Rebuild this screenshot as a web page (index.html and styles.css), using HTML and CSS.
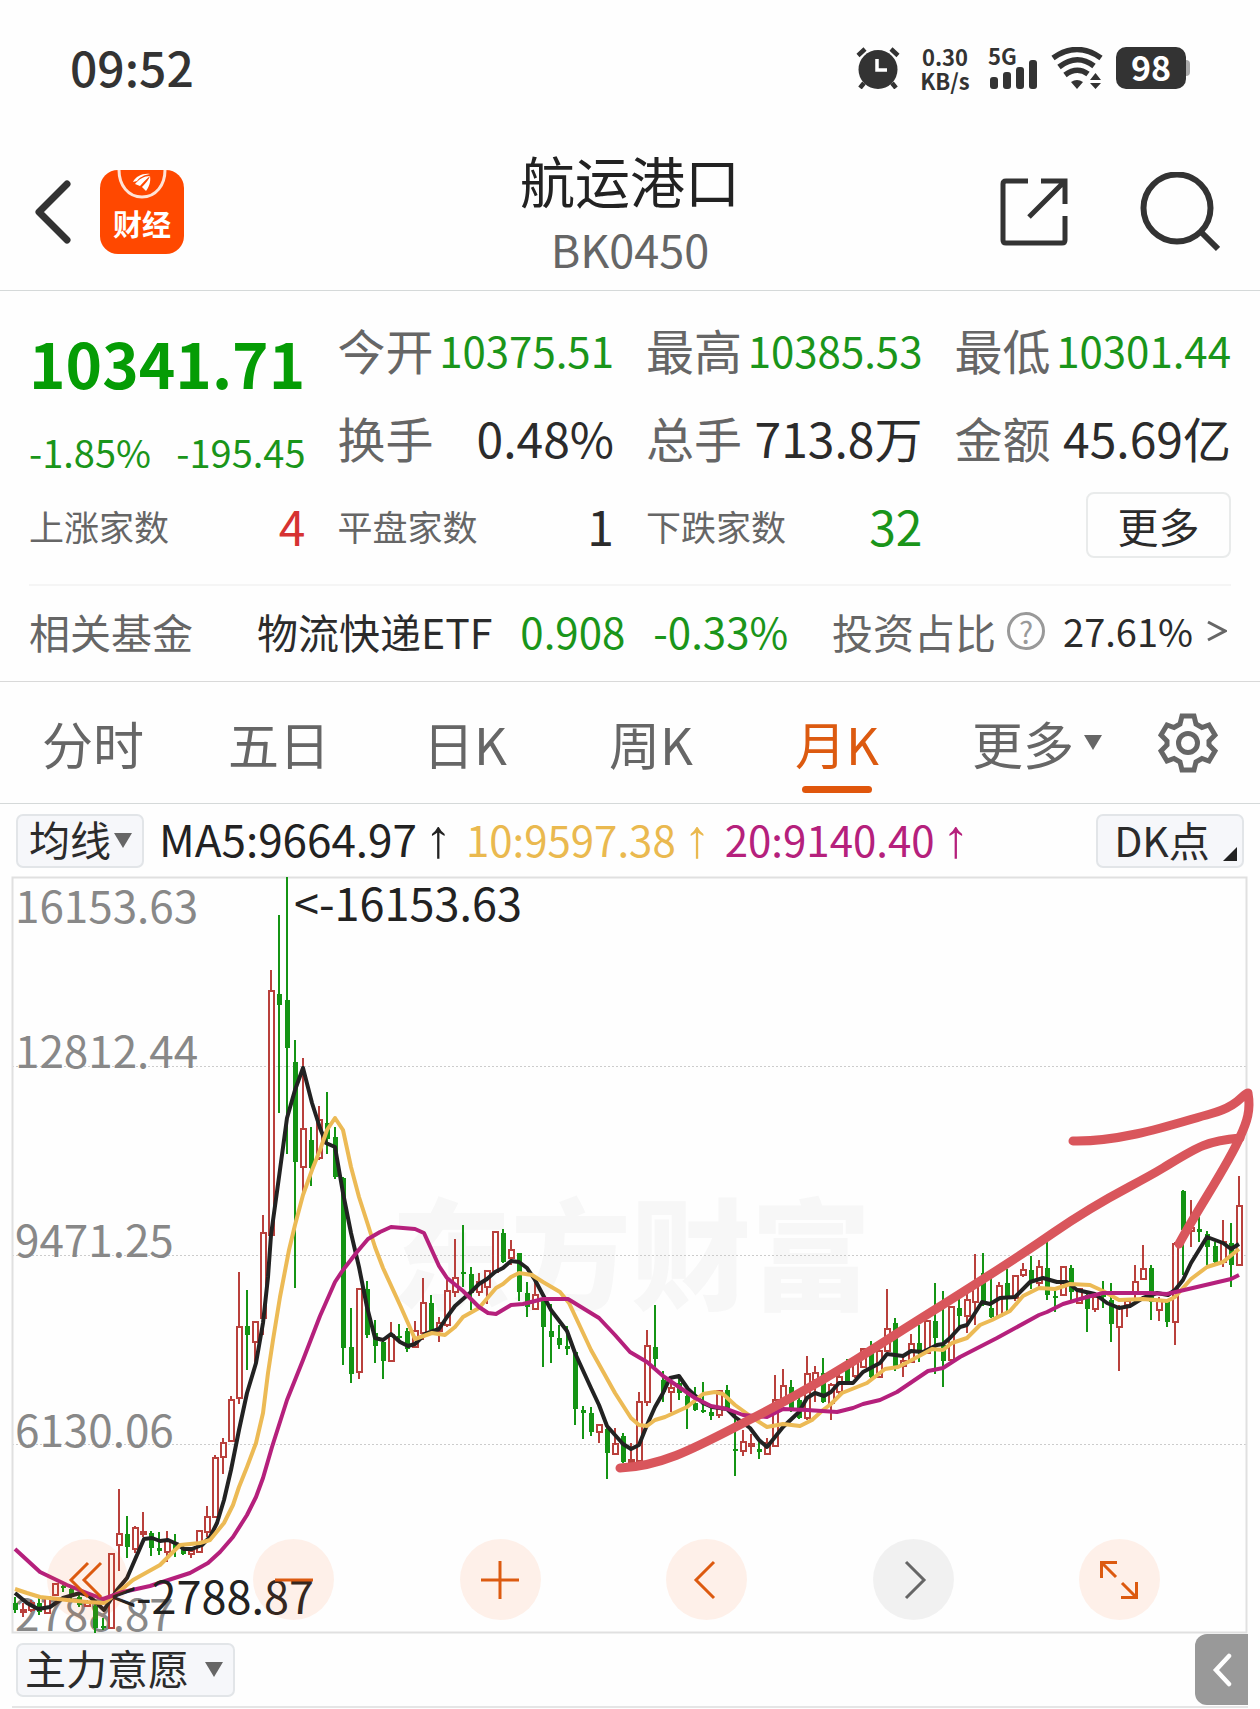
FILE: index.html
```html
<!DOCTYPE html>
<html lang="zh-CN">
<head>
  <meta charset="UTF-8" />
  <meta name="viewport" content="width=device-width, initial-scale=1.0" />
  <title>航运港口 BK0450</title>
  <link rel="stylesheet" href="styles.css">
</head>
<body>

<div class="status-bar">
  <div class="clock">09:52</div>
  <div class="status-icons">
    <svg width="44" height="42" viewBox="0 0 44 42">
      <circle cx="22" cy="22.500" r="19.500" fill="#333"/>
      <path d="M2 8.500L9 2M42 8.500L35 2M8 36l-4 5M36 36l4 5" stroke="#333" stroke-width="4.500" fill="none"/>
      <path d="M21 12v11h10" stroke="#fff" stroke-width="3.500" fill="none"/>
    </svg>
    <div class="speed"><span>0.30</span><span>KB/s</span></div>
    <div class="signal">
      <span>5G</span>
      <svg width="48" height="42" viewBox="0 0 48 42" fill="#333">
        <rect x="0" y="30" width="8" height="12" rx="3"/>
        <rect x="13" y="25" width="8" height="17" rx="3"/>
        <rect x="26" y="20" width="8" height="22" rx="3"/>
        <rect x="39" y="13" width="8" height="29" rx="3"/>
      </svg>
    </div>
    <svg width="52" height="42" viewBox="0 0 52 42">
      <path d="M2 11Q26 -6 50 11M8 20Q26 6 43 19M14 28Q26 19 37 27" stroke="#333" stroke-width="5.500" fill="none"/>
      <path d="M20 35q6-4 12 0l-6 7zM39 33l5.500-7 5.500 7zM39 36h11l-5.500 6z" fill="#333"/>
    </svg>
    <div class="battery">98</div>
  </div>
</div>

<header class="header">
  <div class="header-side">
    <button class="icon-btn" aria-label="返回">
      <svg width="38" height="64" viewBox="0 0 38 64"><path d="M33 4L5 32l28 28" stroke="#333" stroke-width="7" stroke-linecap="round" stroke-linejoin="round" fill="none"/></svg>
    </button>
    <div class="logo">
      <svg width="50" height="30" viewBox="0 0 50 30">
        <path d="M2 0c0 15 9 27 23 27S48 15 48 0" stroke="#ffe3d6" stroke-width="3" fill="none"/>
        <path d="M16 12c3-6 10-9 17-8-6 1-10 3-13 7zM18 14c4-5 9-8 15-8-4 3-7 7-10 10zM25 17c4-4 7-8 8-11 1 6-1 11-4 15z" fill="#fff"/>
      </svg>
      <span>财经</span>
    </div>
  </div>
  <div class="header-title">
    <h1>航运港口</h1>
    <p>BK0450</p>
  </div>
  <div class="header-side right">
    <button class="icon-btn" aria-label="分享">
      <svg width="68" height="68" viewBox="0 0 68 68"><path d="M28 3H6Q3 3 3 6V62Q3 65 6 65H62Q65 65 65 62V38M41 3H65V26M65 3L29 39" stroke="#333" stroke-width="5" fill="none"/></svg>
    </button>
    <button class="icon-btn" aria-label="搜索">
      <svg width="80" height="80" viewBox="0 0 80 80"><circle cx="37" cy="36" r="33.500" stroke="#333" stroke-width="6" fill="none"/><path d="M60 59L78 77" stroke="#333" stroke-width="6"/></svg>
    </button>
  </div>
</header>

<section class="quote">
  <div class="quote-grid">
    <div class="price-block">
      <div class="price">10341.71</div>
      <div class="changes"><span>-1.85%</span><span>-195.45</span></div>
    </div>
    <div class="stat"><span>今开</span><b class="small down">10375.51</b></div>
    <div class="stat"><span>最高</span><b class="small down">10385.53</b></div>
    <div class="stat"><span>最低</span><b class="small down">10301.44</b></div>
    <div class="stat"><span>换手</span><b>0.48%</b></div>
    <div class="stat"><span>总手</span><b>713.8万</b></div>
    <div class="stat"><span>金额</span><b>45.69亿</b></div>
    <div class="stat count"><span>上涨家数</span><b class="up">4</b></div>
    <div class="stat count"><span>平盘家数</span><b>1</b></div>
    <div class="stat count"><span>下跌家数</span><b class="down">32</b></div>
    <div class="stat more"><button class="more-btn">更多</button></div>
  </div>
  <div class="fund">
    <span class="muted">相关基金</span>
    <a href="#" class="fund-name">物流快递ETF</a>
    <span class="down num">0.908</span>
    <span class="down num">-0.33%</span>
    <span class="ratio">
      <span class="muted">投资占比</span>
      <button class="help" aria-label="说明">?</button>
      <span class="percent">27.61%</span>
      <svg width="20" height="24" viewBox="0 0 20 24"><path d="M1 3l17 9L1 21" stroke="#666" stroke-width="3" fill="none"/></svg>
    </span>
  </div>
</section>

<nav class="tabs">
  <button class="tab">分时</button>
  <button class="tab">五日</button>
  <button class="tab">日K</button>
  <button class="tab">周K</button>
  <button class="tab active">月K</button>
  <div class="dropdown tab-more">
    <select aria-label="更多周期"><option>更多</option></select>
  </div>
  <button class="icon-btn" aria-label="设置">
    <svg width="60" height="60" viewBox="0 0 60 60" fill="none" stroke="#666" stroke-width="5" stroke-linejoin="miter">
      <path d="M24 3H36L38 11L44 14.500L51 12L57 22L51 28V32L57 38L51 48L44 45.500L38 49L36 57H24L22 49L16 45.500L9 48L3 38L9 32V28L3 22L9 12L16 14.500L22 11Z"/>
      <circle cx="30" cy="30" r="9.500"/>
    </svg>
  </button>
</nav>

<div class="ma-bar">
  <div class="dropdown box">
    <select aria-label="主图指标"><option>均线</option></select>
  </div>
  <div class="ma-values">
    <span class="ma5">MA5:9664.97<i>↑</i></span>
    <span class="ma10">10:9597.38<i>↑</i></span>
    <span class="ma20">20:9140.40<i>↑</i></span>
  </div>
  <button class="dk-btn">DK点</button>
</div>

<section class="chart">
  <svg class="kline" id="kline" viewBox="12 877 1236 756">
    <text class="watermark" x="391" y="1301">东方财富</text>
    <path class="grid" d="M12 1066.500H1247M12 1255.500H1247M12 1444.500H1247"/>
    <rect class="frame" x="12.500" y="877.500" width="1234" height="755"/>
    <g class="axis">
      <text x="15" y="923">16153.63</text>
      <text x="15" y="1068">12812.44</text>
      <text x="15" y="1257">9471.25</text>
      <text x="15" y="1447">6130.06</text>
      <text x="15" y="1631">2788.87</text>
    </g>
    <g id="candles"></g>
    <polyline class="line line5" points="15,1593 27,1603 38,1609 50,1607 63,1598 80,1593 88,1595 104,1610 117,1590 127,1578 137,1555 144,1539 152,1538 160,1541 168,1540 177,1544 184,1549 192,1549 202,1545 210,1537 217,1523 224,1500 231,1470 239,1430 247,1393 256,1363 263,1323 268,1277 271,1235 279,1177 287,1118 295,1090 303,1068 312,1103 320,1128 326,1143 335,1147 343,1193 351,1233 359,1267 367,1307 375,1338 383,1340 391,1334 400,1342 408,1346 415,1344 425,1334 439,1329 447,1317 455,1306 471,1292 479,1284 487,1279 495,1272 503,1268 511,1261 519,1262 527,1268 535,1280 543,1295 551,1310 567,1331 575,1353 591,1388 599,1405 607,1426 623,1444 631,1449 639,1445 647,1425 655,1407 663,1393 670,1378 679,1376 688,1389 703,1403 712,1407 727,1409 735,1417 750,1428 759,1440 767,1447 775,1437 783,1427 799,1412 807,1398 815,1393 824,1396 831,1392 839,1383 853,1383 863,1372 880,1363 887,1354 903,1356 911,1351 923,1352 937,1345 943,1344 950,1338 960,1327 967,1325 975,1313 982,1302 990,1304 1000,1298 1015,1297 1030,1282 1043,1278 1057,1282 1067,1282 1077,1290 1095,1294 1107,1303 1119,1308 1130,1306 1143,1298 1157,1293 1168,1295 1175,1290 1183,1280 1191,1263 1207,1237 1223,1243 1231,1249 1239,1244"/>
    <polyline class="line line10" points="15,1589 27,1593 40,1597 67,1600 87,1602 104,1603 115,1595 133,1580 160,1565 180,1545 200,1543 210,1540 224,1523 233,1505 239,1487 247,1467 256,1443 263,1413 268,1373 273,1340 280,1297 289,1250 295,1225 303,1195 312,1170 320,1150 327,1130 335,1118 343,1130 351,1167 359,1197 368,1225 375,1247 383,1268 400,1305 415,1339 432,1333 445,1335 455,1327 463,1317 479,1308 496,1288 503,1284 511,1277 519,1273 532,1275 543,1282 560,1292 569,1303 577,1320 591,1350 615,1393 631,1418 639,1425 647,1426 655,1420 665,1417 687,1407 703,1394 715,1392 723,1394 735,1405 753,1418 767,1427 783,1424 800,1426 812,1420 823,1410 831,1404 842,1393 867,1383 885,1369 898,1367 910,1361 932,1349 943,1350 952,1343 967,1338 980,1325 992,1320 1010,1311 1023,1296 1039,1288 1055,1289 1070,1284 1090,1285 1103,1291 1119,1300 1143,1299 1167,1301 1175,1297 1191,1279 1207,1267 1223,1262 1239,1249"/>
    <polyline class="line line20" points="15,1549 40,1572 67,1585 87,1593 103,1599 123,1592 150,1586 190,1573 208,1563 220,1552 233,1537 247,1515 256,1497 263,1478 272,1447 287,1400 303,1360 320,1316 335,1282 343,1270 357,1252 368,1239 380,1232 391,1227 415,1229 424,1233 439,1266 447,1278 463,1291 479,1307 488,1313 496,1314 511,1305 523,1304 543,1299 568,1299 599,1318 615,1335 630,1352 647,1362 663,1376 679,1387 695,1398 711,1406 727,1409 743,1415 767,1417 783,1409 807,1410 837,1412 853,1408 863,1404 880,1400 897,1392 928,1371 943,1368 960,1357 997,1338 1039,1315 1047,1312 1063,1304 1087,1297 1103,1293 1150,1293 1167,1294 1197,1287 1231,1279 1239,1275"/>
    <text class="mark" x="294" y="921">&lt;-16153.63</text>
    <text class="mark" x="111" y="1614">&lt;-2788.87</text>
    <path class="arrow" d="M620 1468C665 1466 700 1445 753 1418S850 1364 887 1340S1000 1270 1053 1233S1130 1188 1163 1168S1205 1141 1240 1138"/>
    <path class="arrow" d="M1073 1141C1125 1142 1180 1122 1210 1114S1243 1093 1248 1093C1251 1110 1247 1122 1240 1137C1228 1165 1200 1205 1179 1244"/>
  </svg>

  <div class="chart-tools">
    <button class="tool" aria-label="最早"><svg viewBox="0 0 40 40"><path d="M20 3L3 20l17 17M33 3L16 20l17 17"/></svg></button>
    <button class="tool" aria-label="缩小"><svg viewBox="0 0 40 40"><path d="M1 20h38"/></svg></button>
    <button class="tool" aria-label="放大"><svg viewBox="0 0 40 40"><path d="M1 20h38M20 1v38"/></svg></button>
    <button class="tool" aria-label="左移"><svg viewBox="0 0 40 40"><path d="M27 2L9 20l18 18"/></svg></button>
    <button class="tool off" aria-label="右移"><svg viewBox="0 0 40 40"><path d="M13 2l18 18-18 18"/></svg></button>
    <button class="tool" aria-label="全屏"><svg viewBox="0 0 40 40"><path d="M18 2.500H2.500V18M3 3l14 14M22 37.500H37.500V22M37 37L23 23"/></svg></button>
  </div>
</section>

<footer class="sub-bar">
  <div class="dropdown box wide">
    <select aria-label="副图指标"><option>主力意愿</option></select>
  </div>
  <button class="drawer" aria-label="展开">
    <svg width="20" height="34" viewBox="0 0 20 34"><path d="M17 3L4 17l13 14" stroke="#fff" stroke-width="4.500" stroke-linecap="round" fill="none"/></svg>
  </button>
</footer>

<script src="chart.js"></script>
</body>
</html>
```

FILE: styles.css
```css
* {
  box-sizing: border-box;
}
body {
  margin: 0;
  background: #fefefe;
  color: #2b2b2b;
  font-family: "Noto Sans CJK SC", sans-serif;
}
button, select {
  font-family: inherit;
  color: inherit;
  border: none;
  background: none;
  padding: 0;
  margin: 0;
  cursor: pointer;
}
svg {
  display: block;
}
.down {
  color: #1a951a;
}
.up {
  color: #d63232;
}
.muted {
  color: #666;
}

/* status bar */
.status-bar {
  display: flex;
  justify-content: space-between;
  align-items: center;
  height: 144px;
  padding: 0 74px 8px 70px;
}
.clock {
  font-size: 48px;
  font-weight: 500;
  line-height: 48px;
  padding-bottom: 4px;
  color: #333;
}
.status-icons {
  display: flex;
  align-items: center;
  gap: 13px;
  color: #333;
}
.speed {
  display: flex;
  flex-direction: column;
  align-items: center;
  width: 64px;
  font-size: 22px;
  font-weight: 700;
  line-height: 24px;
}
.signal {
  position: relative;
}
.signal span {
  position: absolute;
  left: -2px;
  top: 0;
  font-size: 22px;
  line-height: 16px;
  font-weight: 700;
}
.battery {
  position: relative;
  width: 70px;
  height: 42px;
  border-radius: 10px;
  background: #333;
  color: #fff;
  font-size: 34px;
  font-weight: 700;
  line-height: 40px;
  text-align: center;
}
.battery::after {
  content: "";
  position: absolute;
  right: -4px;
  top: 13px;
  width: 4px;
  height: 16px;
  border-radius: 0 4px 4px 0;
  background: #aaa;
}

/* header */
.header {
  display: grid;
  grid-template-columns: 1fr auto 1fr;
  height: 147px;
  border-bottom: 1px solid #d5d9d9;
}
.header-side {
  display: flex;
  align-items: center;
  gap: 28px;
  padding: 0 34px 11px;
}
.header-side.right {
  justify-content: flex-end;
  gap: 72px;
  padding-right: 40px;
}
.logo {
  display: flex;
  flex-direction: column;
  align-items: center;
  width: 84px;
  height: 84px;
  border-radius: 18px;
  background: #ff4800;
  color: #fff;
  font-size: 29px;
  font-weight: 700;
  line-height: 46px;
}
.header-title {
  text-align: center;
}
.header-title h1, .header-title p {
  margin: 0;
  font-weight: 400;
  line-height: 70px;
}
.header-title h1 {
  font-size: 55px;
  color: #222;
}
.header-title p {
  font-size: 45px;
  color: #666;
}

/* quote */
.quote {
  padding: 14px 29px 0;
  border-bottom: 1px solid #d9d9d9;
}
.quote-grid {
  display: grid;
  grid-template-columns: repeat(4, minmax(0, 1fr));
  grid-auto-rows: 88px;
  column-gap: 32px;
  padding-bottom: 15px;
}
.price-block {
  grid-row: span 2;
  display: flex;
  flex-direction: column;
  gap: 16px;
  padding-top: 14px;
  color: #059c05;
}
.price {
  font-size: 62px;
  font-weight: 700;
  line-height: 86px;
}
.changes {
  display: flex;
  justify-content: space-between;
  font-size: 38px;
  line-height: 62px;
  color: #1a951a;
}
.stat {
  display: flex;
  justify-content: space-between;
  align-items: center;
  white-space: nowrap;
}
.stat span {
  font-size: 48px;
  color: #666;
}
.stat b {
  font-size: 48px;
  font-weight: 400;
}
.stat b.small {
  font-size: 42px;
}
.stat.count span {
  font-size: 35px;
}
.stat.more {
  justify-content: flex-end;
}
.more-btn {
  width: 145px;
  height: 66px;
  border: 2px solid #e9ebeb;
  border-radius: 8px;
  font-size: 41px;
  line-height: 56px;
}
.fund {
  display: flex;
  align-items: center;
  height: 97px;
  padding-bottom: 6px;
  border-top: 2px solid #f5f5f5;
  font-size: 41px;
  white-space: nowrap;
}
.fund-name {
  margin-left: 64px;
  color: inherit;
  text-decoration: none;
}
.fund .num {
  margin-left: 28px;
  font-size: 42px;
}
.ratio {
  display: flex;
  align-items: center;
  gap: 14px;
  margin: 0 4px 0 auto;
}
.percent {
  font-size: 38px;
}
.help {
  width: 38px;
  height: 38px;
  margin: 0 4px 0 -3px;
  border: 3px solid #999;
  border-radius: 50%;
  color: #999;
  font-size: 30px;
  line-height: 28px;
}

/* period tabs */
.tabs {
  display: flex;
  align-items: center;
  height: 122px;
  border-bottom: 1px solid #d5d9d9;
  font-size: 51px;
  color: #666;
}
.tab {
  position: relative;
  flex: 185;
  height: 121px;
  font-size: inherit;
}
.tab.active {
  color: #dc5a10;
}
.tab.active::after {
  content: "";
  position: absolute;
  left: 50%;
  bottom: 10px;
  width: 70px;
  height: 7px;
  margin-left: -35px;
  border-radius: 4px;
  background: #e0560c;
}
.tabs .icon-btn {
  margin: 0 42px 0 56px;
}

/* drop-downs */
.dropdown {
  position: relative;
}
.dropdown select {
  appearance: none;
  width: 100%;
  height: 100%;
  font-size: inherit;
}
.dropdown::after {
  content: "";
  position: absolute;
  right: 10px;
  top: 50%;
  margin-top: -8px;
  border: 9px solid transparent;
  border-top: 15px solid #666;
  border-bottom: 0;
  pointer-events: none;
}
.tab-more {
  width: 130px;
  margin-left: 42px;
}
.tab-more::after {
  right: 0;
}
.box {
  display: flex;
  align-items: center;
  width: 128px;
  height: 54px;
  padding-left: 11px;
  border: 2px solid #e2e5e8;
  border-radius: 7px;
  background: #f6f7fa;
  font-size: 41px;
}
.box.wide {
  width: 219px;
  padding-left: 7px;
}
.box select {
  flex-shrink: 0;
  height: 66px;
  padding-bottom: 5px;
}

/* moving averages */
.ma-bar {
  display: flex;
  align-items: center;
  height: 73px;
  padding: 0 16px;
}
.ma-values {
  display: flex;
  flex: 1;
  align-items: baseline;
  gap: 14px;
  margin-left: 15px;
  padding-bottom: 4px;
  font-size: 42px;
  line-height: 54px;
  white-space: nowrap;
}
.ma-values i {
  margin-left: 8px;
  font-family: "Liberation Sans", sans-serif;
  font-size: 54px;
  font-style: normal;
  line-height: 0;
}
.ma5 {
  font-size: 44px;
  color: #222;
}
.ma10 {
  color: #eab94f;
}
.ma20 {
  color: #b5207c;
}
.dk-btn {
  position: relative;
  width: 148px;
  height: 54px;
  padding: 0 16px 4px 0;
  border: 2px solid #e2e5e8;
  border-radius: 7px;
  background: #f6f7fa;
  font-size: 41px;
  line-height: 44px;
}
.dk-btn::after {
  content: "";
  position: absolute;
  right: 5px;
  bottom: 5px;
  border-left: 14px solid transparent;
  border-bottom: 14px solid #222;
}

/* chart */
.chart {
  position: relative;
  padding: 0 12px;
}
.kline {
  width: 100%;
  height: auto;
  overflow: visible;
}
.watermark {
  font-size: 120px;
  font-weight: 900;
  fill: #f7f7f7;
}
.grid {
  stroke: #ccc;
  stroke-dasharray: 2 2;
}
.frame {
  fill: none;
  stroke: #e0e0e0;
  stroke-width: 2;
}
.axis {
  font-size: 44px;
  fill: #888;
}
.mark {
  font-size: 45px;
  fill: #222;
}
.rise {
  fill: #fff;
  stroke: #b9403c;
  stroke-width: 2;
}
.fall {
  stroke: #149414;
  stroke-width: 2;
}
.fall-body {
  fill: #149414;
}
.line {
  fill: none;
  stroke-width: 4;
  stroke-linejoin: round;
}
.line5 {
  stroke: #222;
}
.line10 {
  stroke: #ecba55;
}
.line20 {
  stroke: #b5207c;
}
.arrow {
  fill: none;
  stroke: #d9565c;
  stroke-width: 9;
  stroke-linecap: round;
  stroke-linejoin: round;
}
.chart-tools {
  position: absolute;
  left: 47px;
  right: 100px;
  bottom: 13px;
  display: flex;
  justify-content: space-between;
}
.tool {
  display: flex;
  align-items: center;
  justify-content: center;
  width: 81px;
  height: 81px;
  border-radius: 50%;
  background: rgba(255, 100, 20, 0.09);
}
.tool svg {
  width: 40px;
  height: 40px;
  fill: none;
  stroke: #dc5a10;
  stroke-width: 3;
}
.tool.off {
  background: rgba(0, 0, 0, 0.05);
}
.tool.off svg {
  stroke: #666;
}

/* lower panel */
.sub-bar {
  display: flex;
  justify-content: space-between;
  align-items: center;
  height: 75px;
  margin: 0 12px;
  padding-left: 4px;
  border-bottom: 2px solid #e5e5e5;
}
.drawer {
  display: flex;
  align-items: center;
  justify-content: center;
  width: 53px;
  height: 71px;
  border-radius: 12px 0 0 12px;
  background: #999;
}
```

FILE: chart.js
```js
// [up, high, body top, body bottom, low] in chart units, one entry per month
const candles = [
  [0,1597,1603,1610,1613],[1,1603,1610,1612,1617],[1,1600,1603,1610,1612],[0,1598,1603,1612,1615],[1,1596,1597,1613,1613],
  [1,1583,1584,1595,1595],[0,1585,1586,1588,1592],[0,1587,1589,1595,1600],[0,1595,1597,1605,1607],[1,1600,1602,1606,1607],
  [0,1602,1606,1628,1633],[0,1618,1626,1628,1630],[1,1553,1554,1628,1628],[1,1489,1534,1545,1571],[0,1516,1534,1547,1558],
  [1,1526,1528,1549,1553],[1,1512,1532,1534,1537],[0,1531,1533,1548,1556],[0,1532,1548,1551,1555],[1,1531,1541,1552,1562],
  [0,1534,1543,1550,1557],[0,1547,1549,1554,1555],[1,1547,1551,1554,1558],[1,1531,1531,1552,1552],[1,1506,1517,1532,1537],
  [1,1455,1458,1517,1517],[1,1438,1443,1457,1474],[1,1396,1400,1441,1441],[1,1272,1327,1398,1404],[0,1290,1326,1335,1370],
  [1,1322,1322,1342,1366],[1,1215,1233,1318,1335],[1,970,991,1235,1235],[0,915,994,1005,1113],[0,877,1000,1048,1154],
  [0,1040,1062,1162,1288],[1,1058,1129,1167,1192],[0,1127,1140,1168,1186],[1,1106,1120,1158,1160],[0,1092,1123,1139,1154],
  [0,1127,1137,1177,1179],[0,1177,1178,1348,1365],[0,1308,1347,1374,1383],[1,1289,1289,1372,1379],[0,1281,1289,1335,1338],
  [0,1320,1333,1346,1363],[0,1340,1342,1361,1379],[1,1322,1335,1361,1362],[0,1324,1336,1338,1343],[0,1328,1331,1349,1352],
  [1,1321,1331,1347,1348],[1,1278,1303,1333,1340],[0,1295,1303,1330,1335],[1,1317,1323,1331,1342],[1,1280,1291,1325,1327],
  [1,1239,1278,1292,1297],[0,1225,1272,1273,1287],[0,1267,1274,1293,1310],[1,1273,1282,1292,1296],[1,1270,1271,1287,1304],
  [1,1232,1232,1272,1272],[0,1229,1233,1262,1263],[1,1240,1250,1258,1265],[0,1253,1253,1292,1301],[0,1282,1293,1307,1317],
  [1,1282,1295,1309,1309],[0,1297,1301,1327,1367],[0,1304,1331,1337,1363],[0,1325,1338,1345,1349],[0,1326,1346,1349,1355],
  [0,1351,1352,1409,1425],[0,1406,1410,1413,1439],[0,1407,1413,1432,1436],[1,1425,1425,1432,1443],[0,1428,1429,1453,1479],
  [1,1428,1444,1454,1454],[0,1433,1436,1462,1463],[1,1443,1460,1462,1463],[1,1392,1402,1461,1461],[1,1330,1346,1402,1406],
  [0,1305,1347,1359,1367],[0,1371,1380,1392,1402],[1,1377,1388,1392,1412],[0,1377,1383,1393,1400],[0,1390,1396,1406,1429],
  [0,1387,1403,1410,1411],[0,1382,1410,1412,1413],[0,1408,1412,1416,1420],[1,1390,1391,1415,1418],[0,1385,1390,1408,1410],
  [0,1413,1449,1451,1476],[1,1430,1442,1451,1456],[1,1434,1444,1446,1454],[0,1440,1449,1452,1459],[1,1438,1443,1454,1454],
  [1,1375,1400,1446,1446],[1,1369,1386,1403,1405],[0,1380,1387,1411,1412],[0,1397,1400,1418,1419],[1,1356,1374,1418,1420],
  [1,1366,1373,1380,1402],[0,1358,1373,1402,1403],[1,1383,1385,1403,1420],[1,1373,1377,1392,1394],[0,1359,1363,1382,1383],
  [1,1362,1363,1376,1378],[1,1348,1349,1367,1368],[0,1341,1347,1377,1381],[1,1348,1351,1377,1378],[1,1289,1329,1351,1352],
  [0,1318,1323,1366,1371],[1,1357,1361,1366,1377],[1,1334,1344,1362,1363],[0,1325,1343,1352,1362],[1,1320,1321,1353,1354],
  [0,1283,1321,1338,1374],[0,1291,1345,1361,1387],[1,1306,1307,1360,1360],[0,1297,1308,1316,1328],[1,1290,1300,1316,1333],
  [1,1254,1283,1302,1325],[0,1253,1273,1305,1306],[0,1273,1308,1317,1318],[1,1282,1286,1316,1316],[0,1269,1283,1298,1313],
  [1,1275,1276,1298,1301],[1,1263,1270,1275,1277],[0,1256,1270,1281,1289],[1,1260,1267,1283,1287],[0,1238,1268,1295,1300],
  [0,1287,1296,1298,1312],[1,1267,1267,1295,1295],[0,1265,1268,1292,1301],[1,1288,1289,1303,1303],[0,1293,1295,1309,1332],
  [1,1296,1297,1309,1312],[0,1281,1294,1297,1308],[0,1283,1300,1324,1342],[1,1305,1307,1327,1371],[1,1300,1301,1305,1317],
  [1,1265,1282,1293,1300],[1,1245,1269,1279,1280],[0,1265,1268,1302,1320],[1,1297,1300,1310,1321],[0,1299,1300,1322,1327],
  [1,1242,1244,1322,1345],[0,1190,1191,1230,1275],[1,1200,1228,1231,1247],[0,1217,1229,1232,1242],[0,1231,1234,1247,1265],
  [0,1242,1246,1262,1263],[1,1220,1242,1262,1267],[0,1223,1243,1265,1287],[1,1176,1206,1265,1265]
];

const startX = 15;
const step = 8;

function renderCandles() {
  let html = "";
  candles.forEach(([up, high, top, bottom, low], i) => {
    const x = startX + i * step;
    html += `<path class="${up ? "rise" : "fall"}" d="M${x} ${high}V${low}"/>`;
    html += `<rect class="${up ? "rise" : "fall-body"}" x="${x - 2}" y="${top}" width="5" height="${Math.max(bottom - top, 2)}"/>`;
  });
  document.getElementById("candles").innerHTML = html;
}

renderCandles();
```
